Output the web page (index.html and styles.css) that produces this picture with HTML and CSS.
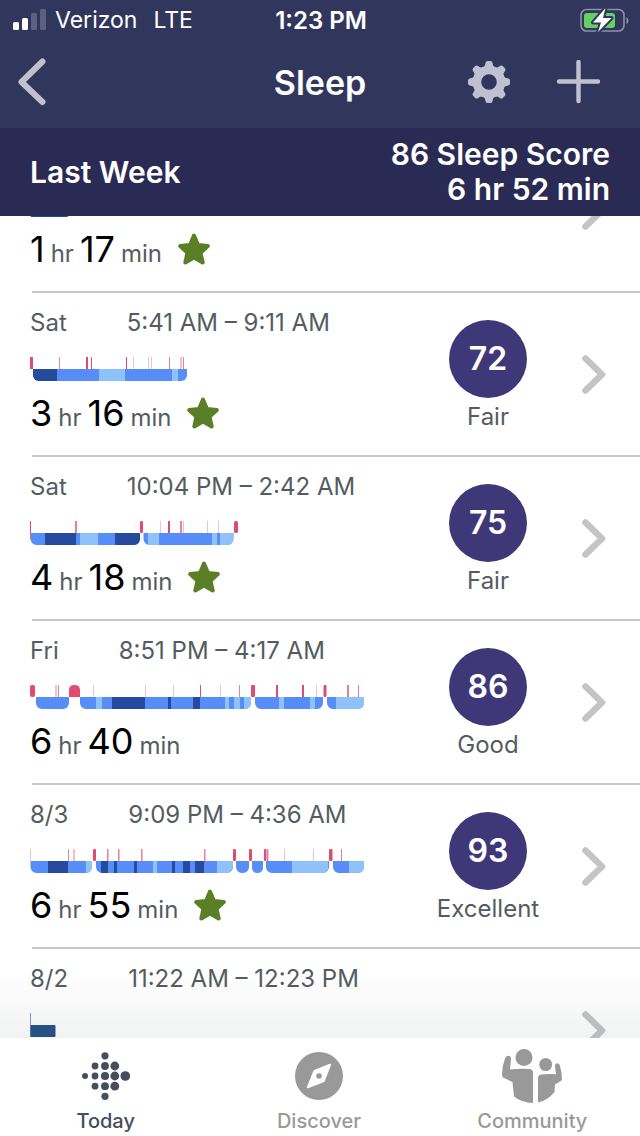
FILE: index.html
```html
<!DOCTYPE html>
<html lang="en">
<head>
<meta charset="utf-8">
<meta name="viewport" content="width=device-width, initial-scale=1">
<title>Sleep</title>
<link rel="stylesheet" href="styles.css">
</head>
<body>
<div class="app">
  <header class="top">
    <div class="status">
      <div class="carrier">
        <svg class="signal" width="34" height="22" viewBox="0 0 34 22" aria-hidden="true">
          <rect x="0" y="13" width="6" height="8" rx="1.5"/><rect x="9" y="9" width="6" height="12" rx="1.5"/>
          <rect class="off" x="18" y="4" width="6" height="17" rx="1.5"/><rect class="off" x="27" y="0" width="6" height="21" rx="1.5"/>
        </svg>
        <span>Verizon</span><span class="network">LTE</span>
      </div>
      <time class="clock">1:23 PM</time>
      <svg class="battery" width="49" height="24" viewBox="0 0 49 24" aria-label="Charging">
        <rect x="1" y="1.5" width="43" height="21.5" rx="5.5" fill="none" stroke="#8f91a8" stroke-width="1.6"/>
        <path d="M46.500 9v7q2-1 2-3.500t-2-3.500z" fill="#8f91a8"/>
        <rect x="4" y="5" width="31" height="15" rx="3" fill="#66d163"/>
        <path d="M25.500 0 13 14.500h8L18 24l13.500-14h-8.500z" fill="#fff" stroke="#31365c" stroke-width="4" paint-order="stroke" stroke-linejoin="round"/>
      </svg>
    </div>
    <nav class="titlebar">
      <button class="icon-button back" aria-label="Back">
        <svg width="28" height="48" viewBox="0 0 28 48"><path d="M24.500 3.500 3.500 24 24.500 44" fill="none" stroke="#c0c1d0" stroke-width="6" stroke-linecap="round" stroke-linejoin="round"/></svg>
      </button>
      <h1>Sleep</h1>
      <div class="actions">
        <button class="icon-button" aria-label="Settings">
          <svg width="42" height="42" viewBox="-21 -21 42 42" fill="#c0c1d0">
            <defs><path id="tooth" d="M-7-14Q-3.800-15.500-3.700-18.500-3.500-21-1.500-21h3Q3.500-21 3.700-18.500 3.800-15.500 7-14z"/></defs>
            <circle r="12" fill="none" stroke="#c0c1d0" stroke-width="8.400"/>
            <use href="#tooth"/><use href="#tooth" transform="rotate(45)"/><use href="#tooth" transform="rotate(90)"/><use href="#tooth" transform="rotate(135)"/>
            <use href="#tooth" transform="rotate(180)"/><use href="#tooth" transform="rotate(225)"/><use href="#tooth" transform="rotate(270)"/><use href="#tooth" transform="rotate(315)"/>
          </svg>
        </button>
        <button class="icon-button" aria-label="Add">
          <svg width="44" height="44" viewBox="0 0 44 44"><path d="M22.500 2v39M3 21.500h39" stroke="#c0c1d0" stroke-width="4.400" stroke-linecap="round"/></svg>
        </button>
      </div>
    </nav>
  </header>

  <section class="summary">
    <h2>Last Week</h2>
    <p>86 Sleep Score<br>6 hr 52 min</p>
  </section>

  <main class="feed">
    <svg width="0" height="0" class="shared" aria-hidden="true">
      <defs>
        <path id="star" d="M16 2.500 20 12l9.800 1-7.300 6.800 2.200 9.700L16 24.600 7.300 29.500l2.200-9.700L2.200 13 12 12z" fill="#5a7f26" stroke="#5a7f26" stroke-width="4" stroke-linejoin="round"/>
        <path id="chevron" d="M3.500 3.500 20 19.500 3.500 35.500" fill="none" stroke="#c4c4c6" stroke-width="6.600" stroke-linecap="round" stroke-linejoin="round"/>
        <clipPath id="c1"><rect x="3" width="154" height="24" rx="6"/></clipPath>
        <clipPath id="c2"><rect x="0.500" width="109.500" height="24" rx="6"/><rect x="113.500" width="90" height="24" rx="6"/></clipPath>
        <clipPath id="c3"><rect x="6" width="33" height="24" rx="6"/><rect x="50" width="171" height="24" rx="6"/><rect x="225" width="68" height="24" rx="6"/><rect x="297" width="37" height="24" rx="6"/></clipPath>
        <clipPath id="c4"><rect x="0.500" width="61.500" height="24" rx="6"/><rect x="66" width="137" height="24" rx="6"/><rect x="206" width="13" height="24" rx="6"/><rect x="222" width="11" height="24" rx="5"/><rect x="236" width="63" height="24" rx="6"/><rect x="303" width="31" height="24" rx="6"/></clipPath>
      </defs>
    </svg>
    <ul class="logs">
      <li>
        <a class="log partial" href="#nap-1">
          <div class="info">
            <svg class="chart" width="340" height="24"><rect x="0.500" y="12" width="37.500" height="12" rx="1" fill="#245087"/></svg>
            <p class="length"><b>1</b> hr <b>17</b> min <svg width="32" height="32"><use href="#star"/></svg></p>
          </div>
          <svg class="go" width="24" height="40"><use href="#chevron"/></svg>
        </a>
      </li>
      <li>
        <a class="log" href="#sat-1">
          <div class="info">
            <p class="when"><span>Sat</span><span>5:41 AM – 9:11 AM</span></p>
            <svg class="chart" width="340" height="24">
              <g clip-path="url(#c1)"><path class="rest" d="M3 18H157"/><path class="deep" d="M3 18H27"/><path class="light" d="M69 18H95M142 18H148"/></g>
              <path class="wake" d="M0 6H3M56 6H58M61 6H62M96 6H97"/><path class="wake mid" d="M29 6H30M139 6H140M153 6H154"/><path class="wake low" d="M103 6H104M118 6H119M121 6H122M150 6H152"/>
            </svg>
            <p class="length"><b>3</b> hr <b>16</b> min <svg width="32" height="32"><use href="#star"/></svg></p>
          </div>
          <div class="score"><strong>72</strong><span>Fair</span></div>
          <svg class="go" width="24" height="40"><use href="#chevron"/></svg>
        </a>
      </li>
      <li>
        <a class="log" href="#sat-2">
          <div class="info">
            <p class="when"><span>Sat</span><span>10:04 PM – 2:42 AM</span></p>
            <svg class="chart" width="340" height="24">
              <g clip-path="url(#c2)"><path class="rest" d="M0 18H204"/><path class="deep" d="M15 18H46M85 18H110"/><path class="light" d="M50 18H68M118 18H129M182 18H187M190 18H204"/></g>
              <rect class="bar" x="110" width="3" height="12" rx="1"/><rect class="bar" x="204" width="4" height="12" rx="1.500"/>
              <path class="wake" d="M0 6H1M138 6H140"/><path class="wake mid" d="M0 12H1M45 6H47M150 6H152"/><path class="wake low" d="M130 6H131M153 6H154M177 6H178M188 6H189"/>
            </svg>
            <p class="length"><b>4</b> hr <b>18</b> min <svg width="32" height="32"><use href="#star"/></svg></p>
          </div>
          <div class="score"><strong>75</strong><span>Fair</span></div>
          <svg class="go" width="24" height="40"><use href="#chevron"/></svg>
        </a>
      </li>
      <li>
        <a class="log" href="#fri">
          <div class="info">
            <p class="when"><span>Fri</span><span>8:51 PM – 4:17 AM</span></p>
            <svg class="chart" width="340" height="24">
              <g clip-path="url(#c3)"><path class="rest" d="M0 18H334"/><path class="deep" d="M82 18H115M138 18H141M163 18H170"/><path class="light" d="M66 18H72M195 18H199M204 18H210M214 18H221M249 18H254M280 18H285M306 18H334"/></g>
              <rect class="bar" width="5" height="12" rx="2"/><path class="bar" d="M39 12V5q0-5 5.500-5T50 5v7z"/><rect class="bar" x="221" width="4" height="12" rx="1"/><rect class="bar" x="293.500" width="3" height="12" rx="1"/>
              <path class="wake" d="M170 6H171M246 6H248M272 6H274"/><path class="wake mid" d="M28 6H29M209 6H210M317 6H319M328 6H329"/><path class="wake low" d="M25 6H27M63 6H64M115 6H116M143 6H144M190 6H191M286 6H287"/>
            </svg>
            <p class="length"><b>6</b> hr <b>40</b> min</p>
          </div>
          <div class="score"><strong>86</strong><span>Good</span></div>
          <svg class="go" width="24" height="40"><use href="#chevron"/></svg>
        </a>
      </li>
      <li>
        <a class="log" href="#aug-3">
          <div class="info">
            <p class="when"><span>8/3</span><span>9:09 PM – 4:36 AM</span></p>
            <svg class="chart" width="340" height="24">
              <g clip-path="url(#c4)"><path class="rest" d="M0 18H334"/><path class="deep" d="M18 18H38M71 18H78M84 18H87M104 18H107M142 18H145M153 18H160M165 18H174"/><path class="light" d="M56 18H62M123 18H127M187 18H203M262 18H298M319 18H334"/></g>
              <rect class="bar" x="63" width="3" height="12" rx="1"/><rect class="bar" x="203" width="3" height="12" rx="1"/><rect class="bar" x="219" width="3" height="12" rx="1"/><rect class="bar" x="234" width="2.500" height="12" rx="1"/><rect class="bar" x="299" width="3.500" height="12" rx="1"/>
              <path class="wake mid" d="M38 6H39M77 6H78M88 6H89M111 6H112M174 6H175M237 6H238M311 6H312"/><path class="wake low" d="M0 6H1M43 6H45M78 6H79M89 6H90M112 6H113M175 6H176M238 6H239M254 6H255M283 6H284"/>
            </svg>
            <p class="length"><b>6</b> hr <b>55</b> min <svg width="32" height="32"><use href="#star"/></svg></p>
          </div>
          <div class="score"><strong>93</strong><span>Excellent</span></div>
          <svg class="go" width="24" height="40"><use href="#chevron"/></svg>
        </a>
      </li>
      <li>
        <a class="log" href="#aug-2">
          <div class="info">
            <p class="when"><span>8/2</span><span>11:22 AM – 12:23 PM</span></p>
            <svg class="chart" width="340" height="24"><path d="M0 0h1v24h-1z" fill="#8196dc"/><rect x="0.500" y="12" width="25" height="12" rx="1" fill="#245087"/></svg>
          </div>
          <svg class="go" width="24" height="40"><use href="#chevron"/></svg>
        </a>
      </li>
    </ul>
  </main>

  <nav class="tabs">
    <a class="active" href="#today">
      <svg width="48" height="48" viewBox="0 0 48 48" fill="currentColor" aria-hidden="true">
        <circle cx="23" cy="3.800" r="3.600"/><circle cx="13" cy="14" r="3.400"/><circle cx="23" cy="14" r="3.900"/><circle cx="32.800" cy="14" r="4.400"/>
        <circle cx="3" cy="24" r="3"/><circle cx="13" cy="24" r="3.400"/><circle cx="23" cy="24" r="4.100"/><circle cx="32.800" cy="24" r="4.400"/><circle cx="43.300" cy="24" r="4.800"/>
        <circle cx="13" cy="34.200" r="3.400"/><circle cx="23" cy="34.200" r="3.900"/><circle cx="32.800" cy="34.200" r="4.400"/><circle cx="23" cy="44.300" r="3.600"/>
      </svg>
      <span>Today</span>
    </a>
    <a href="#discover">
      <svg width="48" height="48" viewBox="0 0 48 48" fill="currentColor" aria-hidden="true">
        <circle cx="24" cy="24" r="24"/>
        <path d="M35 12.800 19.500 19 12.800 35.300 28.800 29z" fill="#fff" stroke="#fff" stroke-width="2" stroke-linejoin="round"/><circle cx="24" cy="24" r="2.800"/>
      </svg>
      <span>Discover</span>
    </a>
    <a href="#community">
      <svg width="60" height="54" viewBox="0 0 60 54" fill="currentColor" aria-hidden="true">
        <circle cx="22" cy="8.500" r="8.500"/><ellipse cx="43.700" cy="15.500" rx="6.400" ry="6.600"/>
        <path d="M3 9.500Q4 6.500 6.500 6.700 9.200 7 9 10L8 20.500Q18 19.500 27 20q4 .2 4 3.500V54Q20 54 12 47.500L10.500 33 2 29Q0 28 0 25.500 0 17 3 9.500z"/>
        <path d="M36 53.500V29q0-3 3-3.500 6-.8 15-.3L53 17q0-2.700 2.500-2.700Q57.500 14.500 58 17 60 24 60 30q0 1.500-1.500 2.300L53 35.500 52.500 43Q45 52 36 53.500z"/>
      </svg>
      <span>Community</span>
    </a>
  </nav>
</div>
</body>
</html>
```

FILE: styles.css
```css
* { box-sizing: border-box; }
body {
  margin: 0;
  font-family: Inter, "Noto Sans", sans-serif;
  color: #545c60;
  background: #fff;
}
h1, h2, p, ul { margin: 0; padding: 0; }
ul { list-style: none; }
a { color: inherit; text-decoration: none; }
svg { display: block; flex: none; }

.app { display: flex; flex-direction: column; height: 100vh; }

.top { background: #31365c; color: #fff; }
.status {
  display: grid;
  grid-template-columns: 1fr auto 1fr;
  align-items: center;
  height: 40px;
  padding: 0 11px 0 13px;
  font-size: 23px;
}
.carrier { display: flex; align-items: center; gap: 8px; }
.network { margin-left: 8px; }
.signal { fill: #fff; }
.off { fill: #5d6181; }
.clock { font-size: 24px; font-weight: 600; }
.battery { justify-self: end; }

.titlebar {
  display: grid;
  grid-template-columns: 1fr auto 1fr;
  align-items: center;
  height: 88px;
  padding: 0 40px 4px 18px;
}
.titlebar h1 { padding: 2px 0 0 22px; font-size: 34px; font-weight: 600; line-height: 40px; }
.icon-button { display: block; padding: 0; border: 0; background: none; cursor: pointer; }
.back { justify-self: start; }
.actions { display: flex; align-items: center; justify-content: flex-end; gap: 46px; }

.summary {
  display: flex;
  justify-content: space-between;
  align-items: center;
  padding: 9px 30px;
  background: #2a2b54;
  color: #fff;
  font-size: 30px;
  font-weight: 600;
  line-height: 35px;
}
.summary h2 { font: inherit; }
.summary p { text-align: right; }

.feed { position: relative; flex: 1; min-height: 0; overflow: hidden; }
.feed::after {
  content: "";
  position: absolute;
  inset: auto 0 0;
  height: 66px;
  background: linear-gradient(rgba(80, 90, 90, 0), rgba(80, 90, 90, 0.08));
  pointer-events: none;
}
.shared { position: absolute; }
/* The feed opens part-way through its first entry. */
.logs { margin-top: -87px; }
.log {
  position: relative;
  display: grid;
  grid-template-columns: 1fr 120px 24px;
  column-gap: 34px;
  align-items: center;
  height: 164px;
  padding: 0 34px 0 30px;
}
.log::after {
  content: "";
  position: absolute;
  inset: auto 0 0 32px;
  height: 2px;
  background: #c6c7c8;
}
.info { align-self: start; padding-top: 16px; }
.partial .info { padding-top: 44px; }
.when { display: flex; gap: 60px; font-size: 24px; line-height: 28px; }
.chart { margin-top: 20px; }
.length { display: flex; align-items: baseline; gap: 6px; margin-top: 8px; font-size: 24px; line-height: 48px; }
.length b { color: #000; font-size: 36px; font-weight: 400; }
.length svg { align-self: flex-start; margin: 8px 0 0 10px; }

.chart path { stroke-width: 12; }
.deep { stroke: #254a9f; }
.rest { stroke: #568df8; }
.light { stroke: #8fc1fa; }
.wake { stroke: #e04b70; }
.mid { opacity: 0.7; }
.low { opacity: 0.35; }
.bar { fill: #e04b70; }

.score {
  display: flex;
  flex-direction: column;
  align-items: center;
  align-self: start;
  padding-top: 27px;
  font-size: 24px;
  line-height: 28px;
}
.score strong {
  display: grid;
  place-items: center;
  width: 78px;
  height: 78px;
  margin-bottom: 5px;
  border-radius: 50%;
  background: #3f3878;
  color: #fff;
  font-size: 32px;
  font-weight: 600;
}
.go { grid-column: 3; }

.tabs {
  display: grid;
  grid-template-columns: repeat(3, 1fr);
  height: 98px;
  background: #fff;
  color: #999;
  font-size: 20px;
  font-weight: 500;
  line-height: 24px;
}
.tabs a { display: flex; flex-direction: column; align-items: center; justify-content: space-between; padding: 14px 2px 3px 0; }
.tabs a:last-child { padding-top: 11px; }
.tabs .active { color: #454d5e; }
```
